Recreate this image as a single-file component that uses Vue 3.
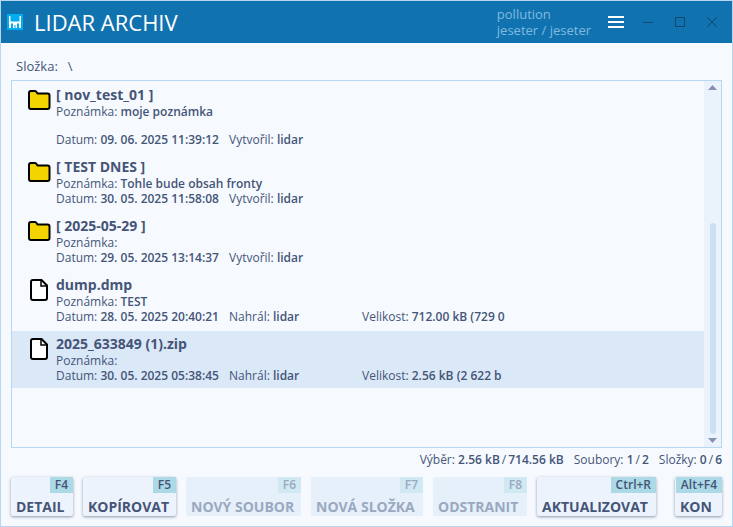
<script setup>
import { ref } from 'vue';

const items = ref([
  { id: 1, folder: true, name: '[ nov_test_01 ]', note: 'moje poznámka', tall: true, date: '09. 06. 2025 11:39:12', user: 'lidar' },
  { id: 2, folder: true, name: '[ TEST DNES ]', note: 'Tohle bude obsah fronty', date: '30. 05. 2025 11:58:08', user: 'lidar' },
  { id: 3, folder: true, name: '[ 2025-05-29 ]', note: '', date: '29. 05. 2025 13:14:37', user: 'lidar' },
  { id: 4, folder: false, name: 'dump.dmp', note: 'TEST', date: '28. 05. 2025 20:40:21', user: 'lidar', size: '712.00 kB (729 0' },
  { id: 5, folder: false, name: '2025_633849 (1).zip', note: '', date: '30. 05. 2025 05:38:45', user: 'lidar', size: '2.56 kB (2 622 b' }
]);

const selected = ref(5);

const actions = [
  { key: 'F4', label: 'DETAIL', size: 'w-detail' },
  { key: 'F5', label: 'KOPÍROVAT', size: 'w-copy' },
  { key: 'F6', label: 'NOVÝ SOUBOR', size: 'w-file', disabled: true },
  { key: 'F7', label: 'NOVÁ SLOŽKA', size: 'w-folder', disabled: true },
  { key: 'F8', label: 'ODSTRANIT', size: 'w-delete', disabled: true },
  { key: 'Ctrl+R', label: 'AKTUALIZOVAT', size: 'w-refresh' },
  { key: 'Alt+F4', label: 'KON', size: 'w-exit' }
];
</script>

<template>
  <div class="window">
    <header class="titlebar">
      <svg class="logo" width="16" height="16" viewBox="0 0 16 16">
        <rect width="16" height="16" fill="#00adef" />
        <path d="M2 2h1.500v5.500h9V2H14v12h-2V9.500h-2V14H8.500v-3h-1v3H6V9.500H4V14H2z" fill="#fff" />
      </svg>
      <h1>LIDAR ARCHIV</h1>
      <div class="account">
        <div>pollution</div>
        <div>jeseter / jeseter</div>
      </div>
      <div class="controls">
        <button type="button" aria-label="Menu">
          <svg width="16" height="12" viewBox="0 0 16 12"><path d="M0 1h16M0 6h16M0 11h16" stroke="#fff" stroke-width="2" /></svg>
        </button>
        <button type="button" aria-label="Minimalizovat">
          <svg width="10" height="10" viewBox="0 0 10 10"><path d="M0 5.500h10" stroke="#15466f" /></svg>
        </button>
        <button type="button" aria-label="Maximalizovat">
          <svg width="10" height="10" viewBox="0 0 10 10"><rect x=".5" y=".5" width="9" height="9" fill="none" stroke="#15466f" /></svg>
        </button>
        <button type="button" aria-label="Zavřít">
          <svg width="10" height="10" viewBox="0 0 10 10"><path d="M0 0l10 10M10 0L0 10" stroke="#15466f" /></svg>
        </button>
      </div>
    </header>

    <main class="content">
      <div class="path"><span>Složka:</span><span>\</span></div>

      <div class="list-box">
        <ul class="list">
          <li
            v-for="item in items"
            :key="item.id"
            class="item"
            :class="{ selected: item.id === selected }"
            @click="selected = item.id"
          >
            <svg v-if="item.folder" class="icon" width="24" height="24" viewBox="0 0 24 24">
              <path d="M2 5q0-2 2-2h4q1 0 1.500 1l1 1.500H20.500q2 0 2 2V19q0 2-2 2H4q-2 0-2-2z" fill="#f4d400" stroke="#000" stroke-width="2" stroke-linejoin="round" />
            </svg>
            <svg v-else class="icon" width="24" height="24" viewBox="0 0 24 24">
              <path d="M6 2h8.500L20 7.500V20q0 2-2 2H6q-2 0-2-2V4q0-2 2-2z" fill="#fff" stroke="#000" stroke-width="2" stroke-linejoin="round" />
              <path d="M14 2v6h6" fill="none" stroke="#000" stroke-width="1.500" />
            </svg>
            <div class="body">
              <div class="name">{{ item.name }}</div>
              <div class="note" :class="{ tall: item.tall }">Poznámka: <b>{{ item.note }}</b></div>
              <div class="meta">
                <span class="date">Datum: <b>{{ item.date }}</b></span>
                <span class="user">{{ item.folder ? 'Vytvořil' : 'Nahrál' }}: <b>{{ item.user }}</b></span>
                <span v-if="item.size">Velikost: <b>{{ item.size }}</b></span>
              </div>
            </div>
          </li>
        </ul>
        <div class="scrollbar">
          <svg width="9" height="5" viewBox="0 0 9 5"><path d="M0 5L4.500 0L9 5z" fill="#8593b0" /></svg>
          <div class="track"><div class="thumb"></div></div>
          <svg width="9" height="5" viewBox="0 0 9 5"><path d="M0 0L4.500 5L9 0z" fill="#8593b0" /></svg>
        </div>
      </div>

      <div class="status">
        <span>Výběr: <b>2.56 kB</b><i>/</i><b>714.56 kB</b></span>
        <span>Soubory: <b>1</b><i>/</i><b>2</b></span>
        <span>Složky: <b>0</b><i>/</i><b>6</b></span>
      </div>

      <footer class="actions">
        <button
          v-for="action in actions"
          :key="action.key"
          type="button"
          class="action"
          :class="action.size"
          :disabled="action.disabled"
        >
          <kbd>{{ action.key }}</kbd>
          <span>{{ action.label }}</span>
        </button>
      </footer>
    </main>
  </div>
</template>

<style>
body {
  background: #f6faff;
}
</style>

<style scoped>
.window {
  box-sizing: border-box;
  min-height: 100vh;
  display: flex;
  flex-direction: column;
  border: 1px solid #b7d6f0;
  background: #f6faff;
  color: #455577;
  font-family: 'Open Sans', 'Noto Sans', sans-serif;
  font-size: 12px;
  line-height: 15px;
}

.titlebar {
  display: flex;
  align-items: center;
  height: 42px;
  padding: 0 4px 0 6px;
  background: #1073b0;
}

h1 {
  margin: 0 0 0 11px;
  flex: 1;
  color: #fff;
  font-size: 22px;
  line-height: 30px;
  font-weight: 400;
}

.account {
  color: #80b9df;
  font-size: 13px;
  line-height: 16px;
  margin-right: 9px;
}

.controls {
  display: flex;
}

.controls button {
  display: flex;
  align-items: center;
  justify-content: center;
  width: 32px;
  height: 32px;
  padding: 0;
  border: 0;
  background: none;
}

.content {
  flex: 1;
  display: flex;
  flex-direction: column;
  padding: 12px 10px 10px;
}

.path {
  display: flex;
  gap: 10px;
  padding: 0 5px;
  margin-bottom: 3px;
  font-size: 13px;
  line-height: 22px;
}

.list-box {
  flex: 1;
  display: flex;
  border: 1px solid #b7d6f0;
}

.list {
  flex: 1;
  display: flex;
  flex-direction: column;
  gap: 2px;
  margin: 0;
  padding: 1px 0 0;
  list-style: none;
}

.item {
  display: flex;
  align-items: flex-start;
  padding: 4px 0 5px 15px;
}

.item.selected {
  background: #dae8f7;
}

.icon {
  flex: none;
  margin: 2px 5px 0 0;
}

.name {
  font-size: 14px;
  line-height: 18px;
  font-weight: 700;
}

.note.tall {
  min-height: 28px;
}

.meta {
  display: flex;
}

.note,
.meta {
  white-space: nowrap;
}

b {
  font-weight: 600;
}

.date {
  width: 173px;
}

.user {
  width: 133px;
}

.scrollbar {
  display: flex;
  flex-direction: column;
  align-items: center;
  gap: 4px;
  width: 17px;
  padding: 4px 0;
  background: #eaf2fc;
}

.track {
  flex: 1;
  display: flex;
  align-items: flex-end;
}

.thumb {
  width: 6px;
  height: 62%;
  border-radius: 3px;
  background: #c9e0f5;
}

.status {
  display: flex;
  justify-content: flex-end;
  gap: 10px;
  padding: 4px 0 10px;
}

.status i {
  padding: 0 2px;
  font-style: normal;
}

.actions {
  display: flex;
  gap: 10px;
}

.action {
  box-sizing: border-box;
  display: flex;
  flex-direction: column;
  align-items: flex-start;
  justify-content: space-between;
  height: 39px;
  padding: 0 0 0 5px;
  border: 0;
  border-radius: 2px;
  background: #edf3fd;
  box-shadow: 0 1px 3px rgba(40, 50, 80, 0.5);
  color: #455577;
  font-family: inherit;
  font-size: 14px;
  line-height: 18px;
  font-weight: 700;
  white-space: nowrap;
}

.action kbd {
  align-self: flex-end;
  padding: 0 5px;
  background: #acd9e6;
  font-family: inherit;
  font-size: 12px;
  line-height: 16px;
  font-weight: 600;
}

.action:disabled {
  background: #e5f0fa;
  box-shadow: none;
  color: #9aa8c0;
}

.action:disabled kbd {
  background: #d0e9f3;
}

.w-detail { width: 62px; }
.w-copy { width: 93px; }
.w-file { width: 115px; }
.w-folder { width: 112px; }
.w-delete { width: 94px; }
.w-refresh { width: 119px; }
.w-exit { width: 47px; margin-left: auto; }
</style>
